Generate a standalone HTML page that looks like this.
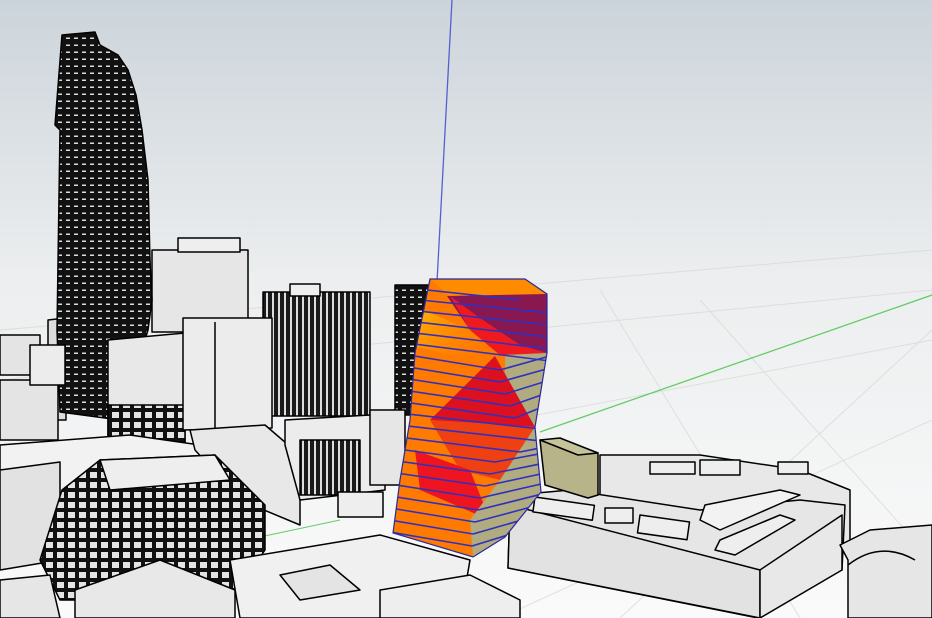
<!DOCTYPE html>
<html><head><meta charset="utf-8"><style>html,body{margin:0;padding:0;width:932px;height:618px;overflow:hidden;background:#fff}</style></head><body>
<svg width="932" height="618" viewBox="0 0 932 618" xmlns="http://www.w3.org/2000/svg">
<defs>
<linearGradient id="sky" x1="0" y1="0" x2="0" y2="1">
<stop offset="0" stop-color="#ccd4db"/><stop offset="0.45" stop-color="#eceeef"/><stop offset="1" stop-color="#fafafa"/></linearGradient>
<pattern id="stripes" width="8" height="7" patternUnits="userSpaceOnUse"><rect width="8" height="7" fill="#111"/><rect x="2" y="2.5" width="4" height="1.5" fill="#ddd"/></pattern>
<pattern id="vstripes" width="6" height="10" patternUnits="userSpaceOnUse"><rect width="6" height="10" fill="#1a1a1a"/><rect x="2" y="0" width="2" height="10" fill="#ddd"/></pattern>
<pattern id="win" width="11" height="10" patternUnits="userSpaceOnUse"><rect width="11" height="10" fill="#111"/><rect x="2" y="2" width="7" height="6" fill="#e4e4e4"/></pattern>
<linearGradient id="yel" x1="0" y1="0" x2="1" y2="0.6"><stop offset="0" stop-color="#ffd000"/><stop offset="1" stop-color="#ff8a00" stop-opacity="0"/></linearGradient>
<clipPath id="tw"><polygon points="430,279 525,279 547,294 547,353 535,427 541,492 505,537 473,557 393,533 400,480 410,420 415,353"/></clipPath>
</defs>
<rect width="932" height="618" fill="url(#sky)"/>
<g stroke="#d6d6d6" stroke-width="1" opacity="0.7">
<line x1="0" y1="330" x2="932" y2="250"/><line x1="0" y1="380" x2="932" y2="290"/><line x1="300" y1="460" x2="932" y2="340"/><line x1="500" y1="618" x2="932" y2="420"/>
<line x1="620" y1="618" x2="932" y2="330"/><line x1="700" y1="300" x2="932" y2="560"/><line x1="600" y1="290" x2="800" y2="618"/>
</g>
<line x1="452" y1="0" x2="437" y2="282" stroke="#5560d0" stroke-width="1.3"/>
<line x1="540" y1="432" x2="932" y2="295" stroke="#66cc66" stroke-width="1.3"/>
<line x1="260" y1="537" x2="340" y2="520" stroke="#66cc66" stroke-width="1"/>
<g stroke="#000" stroke-width="1.5" stroke-linejoin="round">
<rect x="152" y="250" width="96" height="82" fill="#e6e6e6"/>
<rect x="178" y="238" width="62" height="14" fill="#eee"/>
<polygon points="48,320 66,318 66,420 48,420" fill="#ddd"/>
<polygon points="62,35 95,32 100,45 118,55 128,70 136,95 142,130 148,180 150,260 152,300 148,330 120,420 60,412 57,330 60,130 55,125" fill="url(#stripes)"/>
<rect x="263" y="292" width="107" height="124" fill="url(#vstripes)"/>
<rect x="290" y="284" width="30" height="12" fill="#eee"/>
<rect x="395" y="285" width="35" height="130" fill="url(#stripes)"/>
<rect x="0" y="335" width="40" height="40" fill="#e4e4e4"/>
<rect x="0" y="380" width="58" height="60" fill="#e4e4e4"/>
<rect x="30" y="345" width="35" height="40" fill="#ececec"/>
<polygon points="108,340 185,333 185,445 108,440" fill="#e8e8e8"/>
<rect x="108" y="405" width="77" height="38" fill="url(#win)"/>
<polygon points="183,318 272,318 272,428 183,430" fill="#ececec"/>
<line x1="215" y1="322" x2="215" y2="428"/>
<polygon points="0,445 130,435 200,445 240,480 0,500" fill="#f2f2f2"/>
<polygon points="190,430 265,425 300,455 300,525 240,500 195,450" fill="#e8e8e8"/>
<polygon points="285,420 370,415 385,440 385,490 300,500 285,445" fill="#ececec"/>
<rect x="300" y="440" width="60" height="55" fill="url(#vstripes)"/>
<rect x="370" y="410" width="35" height="75" fill="#e6e6e6"/>
<rect x="338" y="492" width="45" height="25" fill="#eee"/>
<polygon points="0,470 60,462 60,560 0,570" fill="#e2e2e2"/>
<polygon points="62,490 100,460 215,455 265,505 265,550 230,600 60,600 40,560" fill="url(#win)"/>
<polygon points="100,460 215,455 230,480 110,490" fill="#eee"/>
<polygon points="0,580 50,575 60,618 0,618" fill="#e6e6e6"/>
<polygon points="75,590 160,560 235,590 235,618 75,618" fill="#e8e8e8"/>
<polygon points="230,560 380,535 470,560 460,618 240,618" fill="#f0f0f0"/>
<polygon points="280,575 330,565 360,590 300,600" fill="#e4e4e4"/>
<polygon points="380,590 470,575 520,600 520,618 380,618" fill="#eee"/>
<polygon points="600,455 700,455 800,470 850,490 850,545 760,570 600,520" fill="#e8e8e8"/>
<polygon points="510,505 515,495 570,490 700,510 800,500 845,505 842,570 760,570 758,618 508,568" fill="#e6e6e6"/>
<polygon points="510,505 760,570 760,618 508,568" fill="#e2e2e2"/>
<polygon points="760,570 842,515 842,570 760,618" fill="#e8e8e8"/>
<rect x="535" y="497" width="60" height="15" fill="#eee" transform="rotate(8 535 497)"/>
<rect x="605" y="508" width="28" height="15" fill="#eee"/>
<rect x="640" y="515" width="50" height="18" fill="#eee" transform="rotate(8 640 515)"/>
<polygon points="705,505 780,490 800,495 720,530 700,520" fill="#f2f2f2"/>
<polygon points="720,540 780,515 795,520 735,555 715,550" fill="#eee"/>
<rect x="650" y="462" width="45" height="12" fill="#eee"/>
<rect x="700" y="460" width="40" height="15" fill="#eee"/>
<rect x="778" y="462" width="30" height="12" fill="#eee"/>
<polygon points="840,545 870,530 932,525 932,618 848,618 848,560" fill="#e6e6e6"/>
<path d="M848,565 Q880,540 915,560" fill="none"/>
<polygon points="540,440 598,453 598,495 588,498 545,485" fill="#b8b48a"/>
<polygon points="540,440 560,438 598,453 578,455" fill="#c6c29a"/>
</g>
<g clip-path="url(#tw)">
<rect x="390" y="270" width="160" height="300" fill="#ff7a00"/>
<polygon points="430,279 525,279 547,294 450,296" fill="#ff8c00"/>
<polygon points="447,296 547,294 547,353 500,355 470,330" fill="#8a1850"/>
<polygon points="450,296 470,330 500,355 547,353 520,345 480,318" fill="#ee1a20"/>
<polygon points="400,300 470,330 500,355 470,360 410,345" fill="url(#yel)"/>
<polygon points="505,355 547,353 535,427 505,410" fill="#b0ac80"/>
<polygon points="495,356 430,420 535,427" fill="#dd1020"/>
<polygon points="430,420 535,427 500,480 460,470" fill="#ee4010"/>
<polygon points="415,450 470,470 490,520 420,490" fill="#ee1420"/>
<polygon points="535,427 541,492 505,537 473,557 470,520 500,480" fill="#b0ac80"/>
<g stroke="#3030c0" stroke-width="1.6">
<line x1="390" y1="286" x2="520" y2="300"/><line x1="390" y1="297" x2="550" y2="313"/>
<line x1="390" y1="308" x2="550" y2="325"/><line x1="390" y1="319" x2="550" y2="337"/>
<line x1="390" y1="330" x2="550" y2="349"/><line x1="390" y1="341" x2="550" y2="361"/>
<line x1="390" y1="352" x2="500" y2="370"/><line x1="500" y1="370" x2="550" y2="356"/>
<line x1="390" y1="364" x2="500" y2="382"/><line x1="500" y1="382" x2="550" y2="368"/>
<line x1="390" y1="376" x2="505" y2="394"/><line x1="505" y1="394" x2="550" y2="380"/>
<line x1="390" y1="388" x2="510" y2="406"/><line x1="510" y1="406" x2="550" y2="392"/>
<line x1="390" y1="400" x2="515" y2="418"/><line x1="515" y1="418" x2="550" y2="404"/>
<line x1="390" y1="412" x2="550" y2="430"/><line x1="390" y1="424" x2="550" y2="442"/>
<line x1="390" y1="436" x2="520" y2="452"/><line x1="520" y1="452" x2="550" y2="446"/>
<line x1="390" y1="448" x2="495" y2="462"/><line x1="495" y1="462" x2="550" y2="452"/>
<line x1="390" y1="460" x2="490" y2="474"/><line x1="490" y1="474" x2="550" y2="462"/>
<line x1="390" y1="472" x2="485" y2="486"/><line x1="485" y1="486" x2="550" y2="472"/>
<line x1="390" y1="484" x2="480" y2="498"/><line x1="480" y1="498" x2="550" y2="482"/>
<line x1="390" y1="496" x2="478" y2="510"/><line x1="478" y1="510" x2="550" y2="492"/>
<line x1="390" y1="508" x2="475" y2="522"/><line x1="475" y1="522" x2="550" y2="502"/>
<line x1="390" y1="520" x2="473" y2="534"/><line x1="473" y1="534" x2="550" y2="512"/>
<line x1="390" y1="532" x2="472" y2="546"/><line x1="472" y1="546" x2="550" y2="522"/>
</g>
</g>
<polygon points="430,279 525,279 547,294 547,353 535,427 541,492 505,537 473,557 393,533 400,480 410,420 415,353" fill="none" stroke="#2a2a9a" stroke-width="1.2"/>
</svg>
</body></html>
